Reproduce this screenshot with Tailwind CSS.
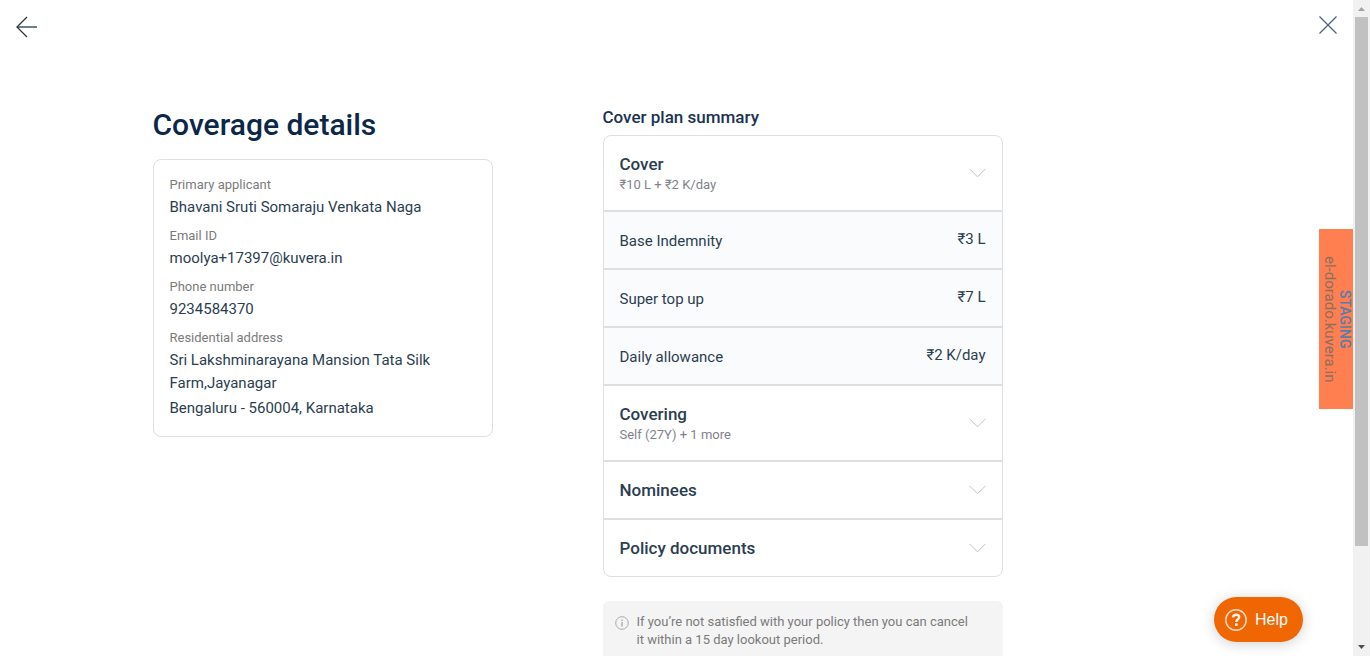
<!DOCTYPE html>
<html lang="en">
<head>
<meta charset="utf-8">
<meta name="viewport" content="width=device-width, initial-scale=1">
<title>Coverage details</title>
<script src="https://cdn.jsdelivr.net/npm/@tailwindcss/browser@4"></script>
</head>
<body class="flex h-screen overflow-hidden bg-white font-[Roboto,sans-serif] text-[#2b3e50]">
  <div class="relative min-w-0 flex-1 overflow-hidden">
    <header class="flex h-[54px] items-center justify-between px-4">
      <button type="button" aria-label="Back" class="block">
        <svg class="block" width="22" height="22" viewBox="0 0 22 22" fill="none"><path d="M1 11H21" stroke="#6f7f8e" stroke-width="2"/><path d="M11 1L1 11L11 21" stroke="#2e3440" stroke-width="1.300"/></svg>
      </button>
      <button type="button" aria-label="Close" class="mb-1 block">
        <svg class="block" width="18" height="18" viewBox="0 0 18 18" fill="none" stroke="#4a5f75" stroke-width="1.200"><path d="M.5 .5L17.500 17.500M17.500 .5L.5 17.500"/></svg>
      </button>
    </header>

    <main class="mx-auto flex max-w-[1048px] gap-[110px] pt-[51px]">
      <section class="w-[340px]">
        <h1 class="text-3xl leading-10 font-medium text-[#0c2748]">Coverage details</h1>
        <dl class="mt-[14px] rounded-lg border border-[#dfdfdf] p-4 text-[15px] leading-[23px]">
          <dt class="mb-0.5 text-[13px] leading-[18px] text-[#7b7b7b]">Primary applicant</dt>
          <dd class="mb-2">Bhavani Sruti Somaraju Venkata Naga</dd>
          <dt class="mb-0.5 text-[13px] leading-[18px] text-[#7b7b7b]">Email ID</dt>
          <dd class="mb-2">moolya+17397@kuvera.in</dd>
          <dt class="mb-0.5 text-[13px] leading-[18px] text-[#7b7b7b]">Phone number</dt>
          <dd class="mb-2">9234584370</dd>
          <dt class="mb-0.5 text-[13px] leading-[18px] text-[#7b7b7b]">Residential address</dt>
          <dd>Sri Lakshminarayana Mansion Tata Silk Farm,Jayanagar</dd>
          <dd class="mt-0.5">Bengaluru - 560004, Karnataka</dd>
        </dl>
      </section>

      <section class="w-[400px]">
        <h2 class="pt-px text-[17px] leading-[22px] font-medium text-[#1b3350]">Cover plan summary</h2>
        <div class="mt-[7px]">
          <button type="button" class="flex h-[76px] w-full items-center justify-between rounded-t-lg border border-[#dfdfdf] px-4 text-left">
            <span class="flex flex-col pt-0.5">
              <span class="text-[17px] leading-[22px] font-medium">Cover</span>
              <span class="text-[13px] leading-5 text-[#7f838b]">₹10 L + ₹2 K/day</span>
            </span>
            <svg width="17" height="10" viewBox="0 0 17 10" fill="none" stroke="#bfc3c8"><path d="M.5 .8L8.500 8.800L16.500 .8"/></svg>
          </button>
          <div class="flex h-[58px] items-center justify-between border border-[#dfdfdf] bg-[#fafbfd] px-4 text-[15px] leading-5">
            <span class="pt-0.5">Base Indemnity</span><span class="pb-0.5">₹3 L</span>
          </div>
          <div class="flex h-[58px] items-center justify-between border border-[#dfdfdf] bg-[#fafbfd] px-4 text-[15px] leading-5">
            <span class="pt-0.5">Super top up</span><span class="pb-0.5">₹7 L</span>
          </div>
          <div class="flex h-[58px] items-center justify-between border border-[#dfdfdf] bg-[#fafbfd] px-4 text-[15px] leading-5">
            <span class="pt-0.5">Daily allowance</span><span class="pb-0.5">₹2 K/day</span>
          </div>
          <button type="button" class="flex h-[76px] w-full items-center justify-between border border-[#dfdfdf] px-4 text-left">
            <span class="flex flex-col pt-0.5">
              <span class="text-[17px] leading-[22px] font-medium">Covering</span>
              <span class="text-[13px] leading-5 text-[#7f838b]">Self (27Y) + 1 more</span>
            </span>
            <svg width="17" height="10" viewBox="0 0 17 10" fill="none" stroke="#bfc3c8"><path d="M.5 .8L8.500 8.800L16.500 .8"/></svg>
          </button>
          <button type="button" class="flex h-[58px] w-full items-center justify-between border border-[#dfdfdf] px-4 text-left">
            <span class="text-[17px] leading-[22px] font-medium">Nominees</span>
            <svg width="17" height="10" viewBox="0 0 17 10" fill="none" stroke="#bfc3c8"><path d="M.5 .8L8.500 8.800L16.500 .8"/></svg>
          </button>
          <button type="button" class="flex h-[58px] w-full items-center justify-between rounded-b-lg border border-[#dfdfdf] px-4 text-left">
            <span class="text-[17px] leading-[22px] font-medium">Policy documents</span>
            <svg width="17" height="10" viewBox="0 0 17 10" fill="none" stroke="#bfc3c8"><path d="M.5 .8L8.500 8.800L16.500 .8"/></svg>
          </button>
        </div>
        <div class="mt-6 flex items-start gap-2 rounded-md bg-[#f4f4f4] p-3 pr-7">
          <svg class="mt-[3px] shrink-0" width="14" height="14" viewBox="0 0 14 14" fill="none"><circle cx="7" cy="7" r="6.300" stroke="#a9abb0"/><path d="M7 6V10.500M7 3.500V5" stroke="#a9abb0" stroke-width="1.400"/></svg>
          <p class="text-[13px] leading-[18px] text-[#7b7b7b]">If you’re not satisfied with your policy then you can cancel it within a 15 day lookout period.</p>
        </div>
      </section>
    </main>

    <div class="absolute top-[229px] right-0 flex h-[180px] w-[34px] flex-col items-center bg-[#ff7f50] text-center text-[15px] leading-[15px] text-[#8a6f62] [writing-mode:vertical-rl]">
      <span class="text-sm leading-4 font-medium text-[#5a7ca8]">STAGING</span>
      <span>el-dorado.kuvera.in</span>
    </div>

    <button type="button" class="absolute right-[50px] bottom-[14px] flex h-[45px] w-[89px] items-center gap-2 rounded-full bg-[#ef6603] pl-[11px] font-['Liberation_Sans',sans-serif] text-base text-white shadow-[0_2px_14px_rgba(0,0,0,0.18)]">
      <svg class="shrink-0" width="22" height="22" viewBox="0 0 22 22" fill="none"><circle cx="11" cy="11" r="10.200" stroke="#fbdcc5" stroke-width="1.500"/><path d="M8 8.300C8.200 6.600 9.400 5.700 11.100 5.700C12.900 5.700 14.200 6.600 14.200 8.200C14.200 10.300 11.300 10.300 11.300 13" stroke="#fff1e7" stroke-width="2.400"/><path d="M11.300 14.300V17" stroke="#fff1e7" stroke-width="2.600"/></svg>
      Help
    </button>
  </div>

  <div aria-hidden="true" class="flex w-[17px] shrink-0 flex-col items-center bg-[#f1f1f1]">
    <svg class="shrink-0" width="17" height="17" viewBox="0 0 17 17"><path d="M5 11L8.500 7L12 11Z" fill="#a3a3a3"/></svg>
    <div class="w-[13px] flex-[529] bg-[#c1c1c1]"></div>
    <div class="flex-[93]"></div>
    <svg class="shrink-0" width="17" height="17" viewBox="0 0 17 17"><path d="M5 6L8.500 10L12 6Z" fill="#505050"/></svg>
  </div>
</body>
</html>
